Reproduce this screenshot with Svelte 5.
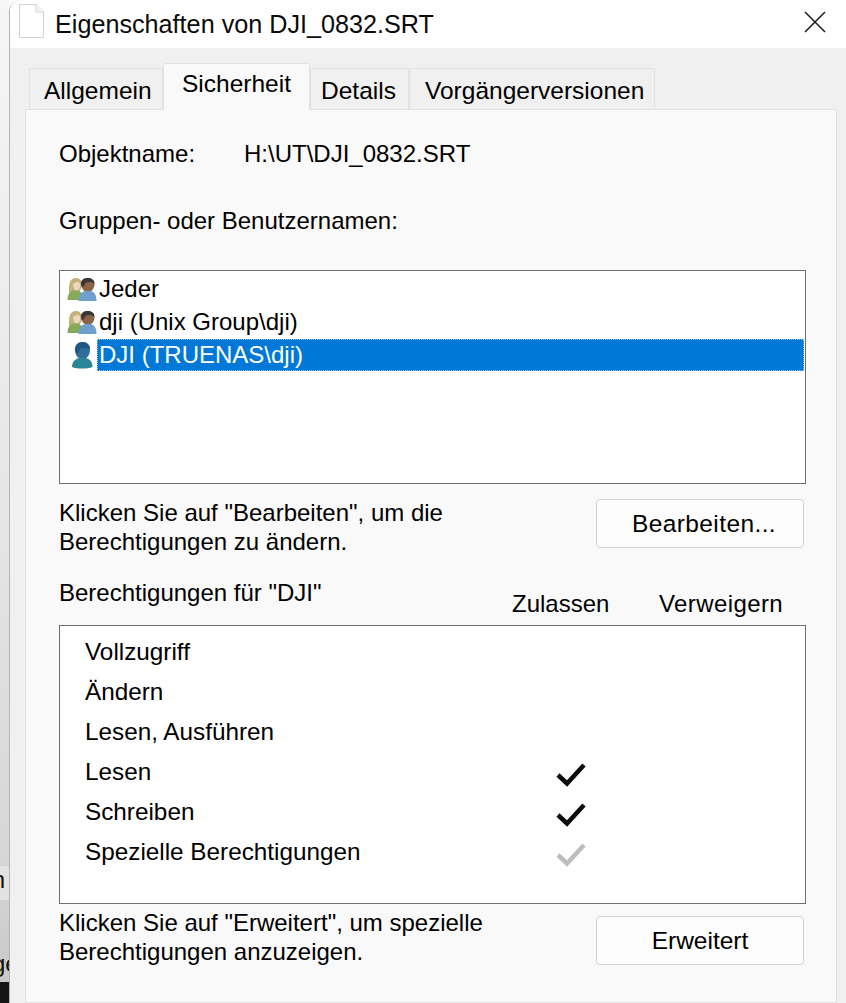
<script lang="ts">
	const tabs = [
		{ label: 'Allgemein', width: 134, pad: 14 },
		{ label: 'Sicherheit', width: 147, pad: 18, active: true },
		{ label: 'Details', width: 99, pad: 10 },
		{ label: 'Vorgängerversionen', width: 246, pad: 15 }
	];

	const principals = [
		{ name: 'Jeder', kind: 'group' },
		{ name: 'dji (Unix Group\\dji)', kind: 'group' },
		{ name: 'DJI (TRUENAS\\dji)', kind: 'user', selected: true }
	];

	const permissions = [
		{ name: 'Vollzugriff', check: '' },
		{ name: 'Ändern', check: '' },
		{ name: 'Lesen, Ausführen', check: '' },
		{ name: 'Lesen', check: 'on' },
		{ name: 'Schreiben', check: 'on' },
		{ name: 'Spezielle Berechtigungen', check: 'special' }
	];
</script>

<div class="screen">
	<!-- Desktop peeking out left of the dialog -->
	<div class="desktop">
		<div class="band"></div>
		<span class="behind first">n</span>
		<span class="behind second">ge</span>
		<div class="taskbar"></div>
	</div>

	<div class="dialog">
		<header class="titlebar">
			<svg class="file-icon" width="25" height="34" viewBox="0 0 25 34">
				<path d="M0.5 0.5H17L24.5 8V33.500H0.5Z" fill="#fff" stroke="#d2d2d2" />
				<path d="M17 0.5V8H24.5" fill="#f4f4f4" stroke="#d2d2d2" />
			</svg>
			<h1>Eigenschaften von DJI_0832.SRT</h1>
			<svg class="close" width="22" height="22" viewBox="0 0 22 22">
				<path d="M1 1L21 21M21 1L1 21" stroke="#1a1a1a" stroke-width="1.5" fill="none" />
			</svg>
		</header>

		<div class="body">
			<nav class="tabs">
				{#each tabs as tab}
					<div class="tab" class:active={tab.active} style="width: {tab.width}px; padding-left: {tab.pad}px">{tab.label}</div>
				{/each}
			</nav>

			<section class="panel">
				<div class="object-row">
					<span class="object-label">Objektname:</span>
					<span>H:\UT\DJI_0832.SRT</span>
				</div>

				<p class="groups-label">Gruppen- oder Benutzernamen:</p>

				<div class="listbox principals">
					{#each principals as p}
						<div class="principal">
							<svg class="person" width="30" height="28" viewBox="0 0 30 28">
								{#if p.kind === 'group'}
									<!-- left person: blonde hair, green shirt -->
									<path d="M2 18C2 14 1.500 11 3 7C4.500 3.500 7 3 9 3C12 3 14.500 5 15 8C15 12 14 15 12 17Z" fill="#c2b27c" />
									<path d="M6 8.500C8 8 10 7 11 6.500C13 8 13.500 10 13 12C12.500 14 11 15.500 9.500 15.500C7.500 15.500 6 12 6 8.500Z" fill="#ecd9bd" />
									<path d="M0.500 25C0.500 19 3 16 7 15.500L11 15.500C14 16.500 16 19 16 25Z" fill="#86ab58" />
									<!-- right person: dark hair and skin, blue shirt -->
									<path d="M14 9C14 5 17 3 21 3C25 3 27.500 5.500 27.500 9C27.500 13 25 17 21 17C17 17 14 13 14 9Z" fill="#8a6446" />
									<path d="M14 8.500C14 5 17 3 21 3C25 3 27.500 5.500 27.500 9C26 7.500 24 7 22 7C19 7 18 8 17 11L15 12Z" fill="#3b3638" />
									<path d="M11.500 26C11.500 20 14 17 18 16L24 16C27.500 17 29.500 20 29.500 26Z" fill="#6f9fcb" />
								{:else}
									<!-- single user, dark teal -->
									<path d="M8 9C8 4 11 1 15.500 1C20 1 23 4 23 9C23 14 20 18 15.500 18C11 18 8 14 8 9Z" fill="#2f6d9a" />
									<path d="M8 9C8 4 11 1 15.500 1C20 1 23 4 23 8C20 6.500 15 7 13 8C12 10 11 12 10 13Z" fill="#1f5683" />
									<path d="M5 26C5 21 8 18 12 17L19 17C23 18 25.500 21 25.500 26C20 28 10 28 5 26Z" fill="#2a8597" />
								{/if}
							</svg>
							<span class="principal-name" class:selected={p.selected}>{p.name}</span>
						</div>
					{/each}
				</div>

				<div class="action-row edit-row">
					<p>Klicken Sie auf "Bearbeiten", um die<br />Berechtigungen zu ändern.</p>
					<button class="edit">Bearbeiten...</button>
				</div>

				<div class="perm-head">
					<span class="perm-title">Berechtigungen für "DJI"</span>
					<span class="allow">Zulassen</span>
					<span class="deny">Verweigern</span>
				</div>

				<div class="listbox perms">
					{#each permissions as perm}
						<div class="perm">
							<span class="perm-name">{perm.name}</span>
							{#if perm.check}
								<svg class="check" width="32" height="28" viewBox="0 0 32 28">
									<path
										d="M3 14L12 22.500L29 4"
										fill="none"
										stroke={perm.check === 'on' ? '#0a0a0a' : '#bdbdbd'}
										stroke-width="4.500"
									/>
								</svg>
							{/if}
						</div>
					{/each}
				</div>

				<div class="action-row advanced-row">
					<p>Klicken Sie auf "Erweitert", um spezielle<br />Berechtigungen anzuzeigen.</p>
					<button>Erweitert</button>
				</div>
			</section>
		</div>
	</div>
</div>

<style>
	:global(body) {
		margin: 0;
		font-family: 'Liberation Sans', sans-serif;
		color: #000;
		overflow: hidden;
	}

	.screen {
		display: flex;
		width: 846px;
		height: 1003px;
		overflow: hidden;
	}

	/* --- Desktop strip --- */
	.desktop {
		position: relative;
		width: 9px;
		flex-shrink: 0;
		background: linear-gradient(180deg, #f6f6f6 0, #e6e6e6 50%, #d6d6d6 86%, #c8c8c8 98%);
		overflow: hidden;
	}

	.band {
		position: absolute;
		left: 0;
		right: 0;
		top: 865px;
		height: 34px;
		background: #e2e2e2;
		border-top: 1px solid #d0d0d0;
		border-bottom: 1px solid #d0d0d0;
	}

	.behind {
		position: absolute;
		font-size: 24px;
		line-height: 28px;
		color: #111;
	}
	.first {
		right: 4px;
		top: 866px;
	}
	.second {
		left: -8px;
		top: 950px;
	}

	.taskbar {
		position: absolute;
		left: 0;
		right: 0;
		top: 982px;
		bottom: 0;
		background: #161616;
	}

	/* --- Dialog --- */
	.dialog {
		flex: 1;
		display: flex;
		flex-direction: column;
		background: #f0f0f0;
		border-top-left-radius: 12px;
		border-left: 1px solid #b4b4b4;
		overflow: hidden;
	}

	.titlebar {
		display: flex;
		align-items: center;
		height: 48px;
		flex-shrink: 0;
		background: #fff;
		padding-left: 9px;
	}

	.file-icon {
		margin-right: 11px;
		margin-top: -6px;
	}

	h1 {
		flex: 1;
		margin: 0;
		font-size: 25.200px;
		font-weight: 400;
		color: #0a0a0a;
	}

	.close {
		margin-right: 20px;
		margin-top: -4px;
	}

	.body {
		flex: 1;
		display: flex;
		flex-direction: column;
		padding: 15px 9px 0 15px;
		min-height: 0;
	}

	/* --- Tabs --- */
	.tabs {
		display: flex;
		align-items: flex-end;
		height: 46px;
		padding-left: 4px;
		position: relative;
		z-index: 1;
	}

	.tab {
		box-sizing: border-box;
		height: 41px;
		border: 1px solid #e2e2e2;
		border-bottom: none;
		background: #f0f0f0;
		display: flex;
		align-items: center;
		font-size: 24.500px;
		padding-top: 4px;
	}

	.tab.active {
		height: 47px;
		background: #f9f9f9;
		margin-bottom: -1px;
		padding-top: 0;
		padding-bottom: 6px;
	}

	/* --- Panel --- */
	.panel {
		flex: 1;
		box-sizing: border-box;
		background: #f9f9f9;
		border: 1px solid #e2e2e2;
		padding: 0 30px 0 33px;
		font-size: 24px;
	}

	p {
		margin: 0;
	}

	.object-row {
		display: flex;
		align-items: center;
		height: 30px;
		margin-top: 29px;
	}

	.object-label {
		width: 185px;
	}

	.groups-label {
		height: 30px;
		line-height: 30px;
		margin-top: 37px;
	}

	.listbox {
		box-sizing: border-box;
		width: 747px;
		background: #fff;
		border: 1px solid #6f6f6f;
	}

	.principals {
		height: 214px;
		margin-top: 34px;
		padding: 1px 1px;
	}

	.principal {
		display: flex;
		align-items: center;
		height: 33px;
		padding-left: 6px;
	}

	.person {
		flex-shrink: 0;
	}

	.principal-name {
		padding: 0 1px 0 2px;
		line-height: 32px;
	}

	.principal-name.selected {
		flex: 1;
		background: #0078d7;
		color: #fff;
		outline: 1px dotted #9cc4e8;
		outline-offset: -1px;
	}

	.action-row {
		display: flex;
		justify-content: space-between;
		width: 745px;
		line-height: 28.500px;
	}

	.edit-row {
		height: 64px;
		padding-top: 15px;
	}

	.advanced-row {
		height: 62px;
		padding-top: 12px;
	}

	.advanced-row p {
		margin-top: -7px;
	}

	button {
		box-sizing: border-box;
		width: 208px;
		height: 49px;
		background: #fdfdfd;
		border: 1px solid #d0d0d0;
		border-radius: 4px;
		font-family: inherit;
		font-size: 24.500px;
		color: #000;
	}

	button.edit {
		letter-spacing: 0.4px;
		padding-left: 14px;
	}

	.perm-head {
		display: grid;
		grid-template-columns: 453px 147px 1fr;
		height: 62px;
		box-sizing: border-box;
	}

	.perm-title {
		padding-top: 15px;
		line-height: 30px;
	}

	.allow,
	.deny {
		padding-top: 26px;
		line-height: 30px;
	}

	.deny {
		letter-spacing: 0.4px;
	}

	.perms {
		height: 279px;
		padding: 6px 0 0 25px;
		font-size: 24.300px;
	}

	.perm {
		position: relative;
		height: 40px;
		line-height: 40px;
	}

	.check {
		position: absolute;
		left: 470px;
		top: 9px;
	}
</style>
